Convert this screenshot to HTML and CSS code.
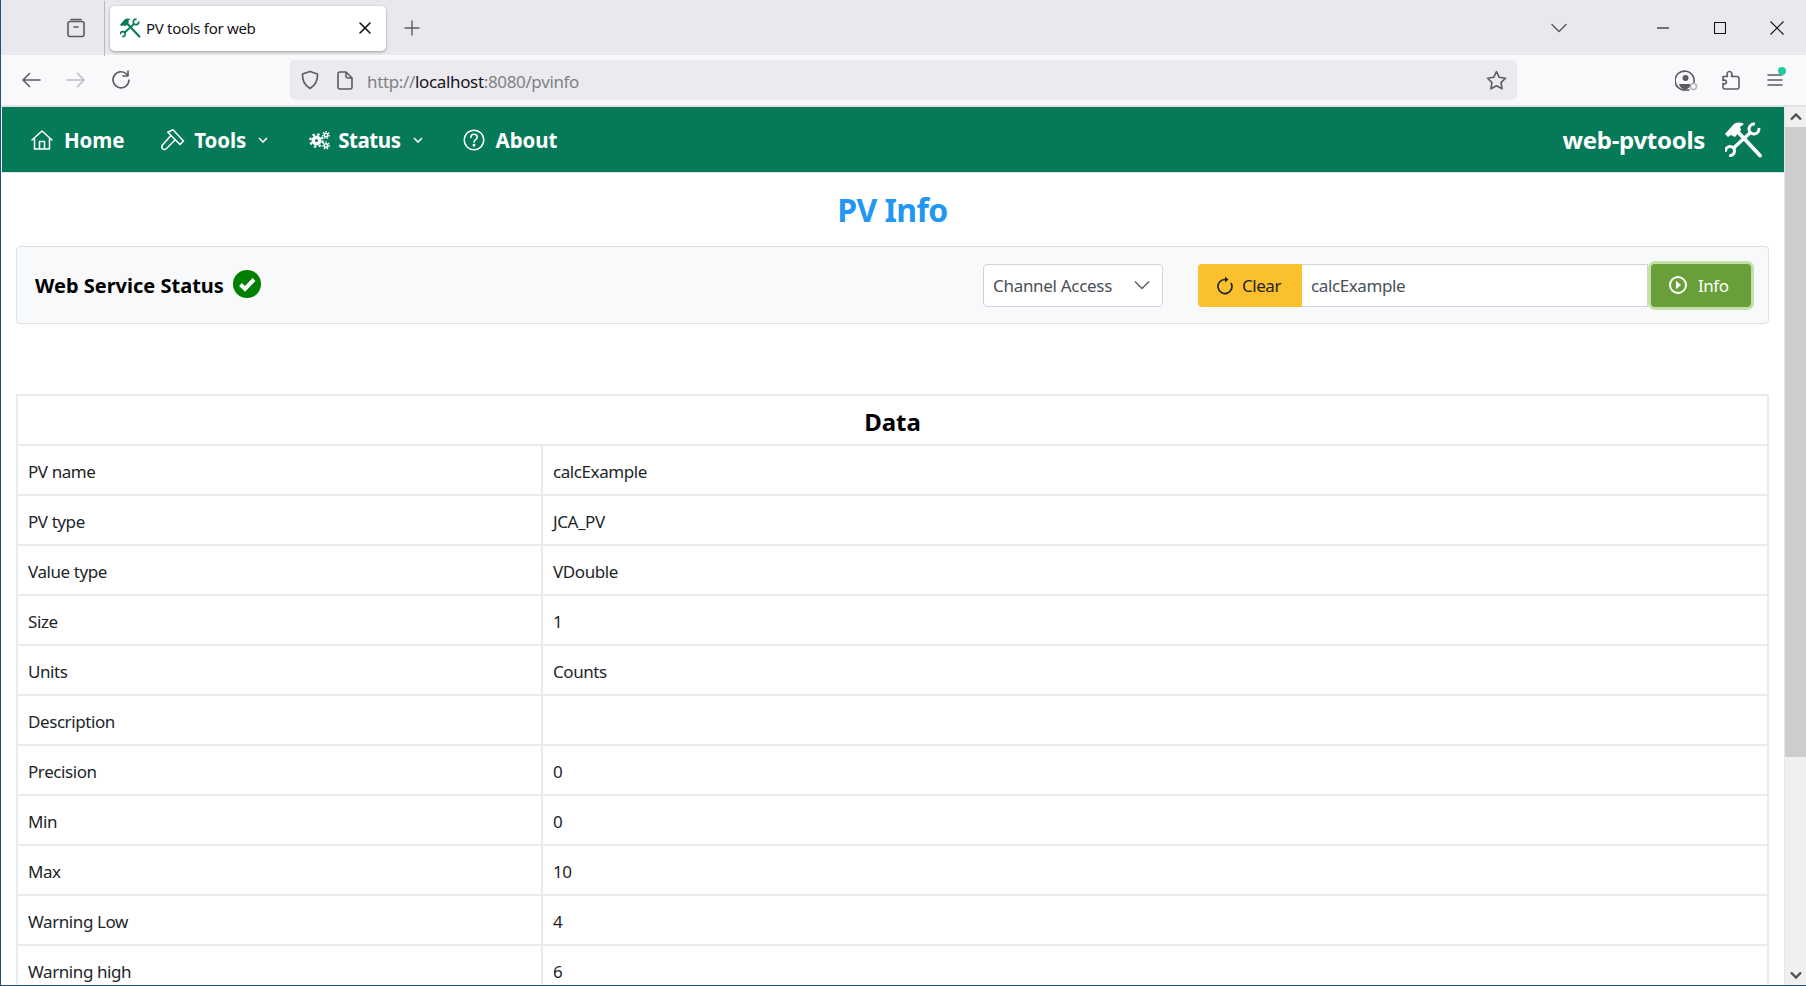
FILE: index.html
```html
<!DOCTYPE html>
<html lang="en">
<head>
<meta charset="utf-8">
<title>PV tools for web</title>
<link rel="stylesheet" href="styles.css">
</head>
<body>
<svg class="defs" aria-hidden="true">
  <symbol id="tools" viewBox="0 0 38 36">
    <g fill="none" stroke="currentColor" stroke-width="3">
      <path d="M29.900 2.100A5 5 0 1 0 33.900 6.100"/>
      <path d="M.6 29.800A4.500 4.500 0 1 1 4.200 33.400"/>
      <path stroke-width="3.400" d="M25.500 10.500 8 26.500"/>
      <path stroke-width="3.800" stroke-linecap="round" d="M12 9 35 33.500"/>
    </g>
    <path fill="currentColor" d="M0 12l3 3 3-2 4 2 6-7-1-3 4-3C15 0 11 0 8 3z"/>
  </symbol>
</svg>
<div class="window">
  <header class="tabbar">
    <svg class="ico sidebar" width="22" height="22" viewBox="0 0 22 22"><path d="M6 2.500h10M3 6.500a2 2 0 0 1 2-2h12a2 2 0 0 1 2 2v11a2 2 0 0 1-2 2H5a2 2 0 0 1-2-2zM9 10h4"/></svg>
    <div class="tab">
      <svg class="favicon" width="21" height="20"><use href="#tools"/></svg>
      <span class="tab-title">PV tools for web</span>
      <svg class="ico tab-close" width="12" height="12" viewBox="0 0 12 12"><path d="M1 1l10 10M11 1 1 11"/></svg>
    </div>
    <svg class="ico plus" width="16" height="16" viewBox="0 0 16 16"><path d="M8 1v14M1 8h14"/></svg>
    <div class="spacer"></div>
    <svg class="ico tablist" width="16" height="10" viewBox="0 0 16 10"><path d="M1 1.500l7 7 7-7"/></svg>
    <svg class="win win-min" width="12" height="2" viewBox="0 0 12 2"><path d="M0 1h12"/></svg>
    <svg class="win win-max" width="12" height="12" viewBox="0 0 12 12"><path d="M.5.5h11v11H.5z"/></svg>
    <svg class="win win-close" width="14" height="14" viewBox="0 0 14 14"><path d="M.5.5l13 13M13.500.5l-13 13"/></svg>
  </header>
  <nav class="toolbar">
    <svg class="ico nav-ico" width="20" height="16" viewBox="0 0 20 16"><path d="M19 8H2M8.500 1.500 2 8l6.500 6.500"/></svg>
    <svg class="ico nav-ico dim" width="20" height="16" viewBox="0 0 20 16"><path d="M1 8h17M11.500 1.500 18 8l-6.500 6.500"/></svg>
    <svg class="ico nav-ico" width="20" height="20" viewBox="0 0 20 20"><path d="M16 4.500A8 8 0 1 0 18 10M17 1v5h-5"/></svg>
    <div class="urlbar">
      <svg class="ico shield" width="18" height="20" viewBox="0 0 18 20"><path d="M9 1.500l7.500 2.500c.3 6-1.500 11-7.500 14.500C3 15 1.200 10 1.500 4z"/></svg>
      <svg class="ico doc" width="16" height="19" viewBox="0 0 16 19"><path d="M3 1h6l6 6v9a2 2 0 0 1-2 2H3a2 2 0 0 1-2-2V3a2 2 0 0 1 2-2zM9 1v4a2 2 0 0 0 2 2h4"/></svg>
      <span class="url"><span class="url-dim">http://</span>localhost<span class="url-dim">:8080/pvinfo</span></span>
      <div class="spacer"></div>
      <svg class="ico star" width="21" height="20" viewBox="0 0 21 20"><path d="M10.500 1.500l2.800 5.800 6.200.9-4.500 4.400 1.100 6.200-5.600-3-5.600 3 1.100-6.200-4.500-4.400 6.200-.9z"/></svg>
    </div>
    <div class="tool-right">
      <span class="account">
        <svg class="ico" width="23" height="21" viewBox="0 0 23 21"><path d="M18.500 14A9.500 9.500 0 1 0 11 20h3"/><circle class="solid" cx="10.500" cy="8" r="3"/><path class="solid" d="M4 14h12c-1 4-4 5.500-6 5.500S5 18 4 14z"/><circle class="badge" cx="18.500" cy="16.500" r="3"/></svg>
      </span>
      <svg class="ico" width="18" height="20" viewBox="0 0 18 20"><path d="M1 6.500h4.500c-1-1.500-.8-5 2-5s3 3.500 2 5H15a2 2 0 0 1 2 2V17a2 2 0 0 1-2 2H3a2 2 0 0 1-2-2v-3.500c1.500 1 3.500 0 3.500-1.500S2.500 9.500 1 10.500z"/></svg>
      <span class="menu">
        <svg class="ico" width="16" height="14" viewBox="0 0 16 14"><path d="M1 2h14M1 7h14M1 12h14"/></svg>
        <span class="dot"></span>
      </span>
    </div>
  </nav>
  <div class="viewport">
    <main class="page">
      <div class="navbar">
        <a class="nav-item">
          <svg class="nav-svg" width="22" height="22" viewBox="0 0 22 22"><path d="M1 11 11 2l10 9M3.500 9v11h15V9M8.500 20v-7.500h5V20"/></svg>
          Home
        </a>
        <a class="nav-item tools">
          <svg class="nav-svg hammer" width="24" height="24" viewBox="0 0 24 24"><path d="M6.800 4.200 12 1.800 22.500 13 19 16.500zM9.500 8 1.500 17C.5 18.500.5 20 2 21c1 1 2.500.5 3.500-.5L14 12"/></svg>
          Tools
          <svg class="chev" width="10" height="6" viewBox="0 0 10 6"><path d="M1 1l4 4 4-4"/></svg>
        </a>
        <a class="nav-item status">
          <svg class="gears" width="22" height="20" viewBox="0 0 22 20"><circle class="hub" cx="7.500" cy="10.500" r="3.300"/><circle class="teeth" cx="7.500" cy="10.500" r="6.200"/><circle class="hub small" cx="17" cy="5" r="1.800"/><circle class="teeth small" cx="17" cy="5" r="3.400"/><circle class="hub small" cx="17" cy="15.500" r="1.800"/><circle class="teeth small" cx="17" cy="15.500" r="3.400"/></svg>
          Status
          <svg class="chev" width="10" height="6" viewBox="0 0 10 6"><path d="M1 1l4 4 4-4"/></svg>
        </a>
        <a class="nav-item about">
          <svg class="nav-svg" width="22" height="22" viewBox="0 0 22 22"><circle cx="11" cy="11" r="9.800"/><path d="M7.800 8.500c0-2 1.500-3.200 3.200-3.200s3.200 1.100 3.200 2.900c0 2.300-3.200 2.500-3.200 5"/><circle class="fill" cx="11" cy="16.300" r=".7"/></svg>
          About
        </a>
        <div class="spacer"></div>
        <span class="brand">web-pvtools</span>
        <svg class="brand-ico" width="38" height="36"><use href="#tools"/></svg>
      </div>
      <h1 class="title">PV Info</h1>
      <section class="panel">
        <span class="status-label">Web Service Status</span>
        <svg class="check" width="28" height="28" viewBox="0 0 28 28"><circle cx="14" cy="14" r="14"/><path d="M7.500 14.500l4.500 4.500 9-9.500"/></svg>
        <div class="spacer"></div>
        <div class="select">
          <span>Channel Access</span>
          <svg class="select-chev" width="16" height="10" viewBox="0 0 16 10"><path d="M1 1.500l7 7 7-7"/></svg>
        </div>
        <div class="input-group">
          <button class="btn btn-clear" type="button">
            <svg class="btn-ico" width="16" height="20" viewBox="0 0 16 20"><path d="M8 4.500A7 7 0 1 0 14 8"/><path class="tri" d="M8 1.500v6l3.500-3z"/></svg>
            Clear
          </button>
          <div class="input">calcExample</div>
          <button class="btn btn-info" type="button">
            <svg class="btn-ico ring" width="20" height="20" viewBox="0 0 20 20"><circle cx="10" cy="10" r="8"/><path class="tri" d="M8 5.800l5 4.200-5 4.200z"/></svg>
            Info
          </button>
        </div>
      </section>
      <table class="data">
        <colgroup><col class="col-key"><col></colgroup>
        <thead><tr><th colspan="2">Data</th></tr></thead>
        <tbody>
          <tr><td>PV name</td><td>calcExample</td></tr>
          <tr><td>PV type</td><td>JCA_PV</td></tr>
          <tr><td>Value type</td><td>VDouble</td></tr>
          <tr><td>Size</td><td>1</td></tr>
          <tr><td>Units</td><td>Counts</td></tr>
          <tr><td>Description</td><td></td></tr>
          <tr><td>Precision</td><td>0</td></tr>
          <tr><td>Min</td><td>0</td></tr>
          <tr><td>Max</td><td>10</td></tr>
          <tr><td>Warning Low</td><td>4</td></tr>
          <tr><td>Warning high</td><td>6</td></tr>
        </tbody>
      </table>
    </main>
    <aside class="scrollbar">
      <div class="sb-btn"><svg class="sb-arrow" width="12" height="8" viewBox="0 0 12 8"><path d="M1 6.500l5-5 5 5"/></svg></div>
      <div class="sb-thumb"></div>
      <div class="sb-track"></div>
      <div class="sb-btn"><svg class="sb-arrow" width="12" height="8" viewBox="0 0 12 8"><path d="M1 1.500l5 5 5-5"/></svg></div>
    </aside>
  </div>
</div>
</body>
</html>
```
FILE: styles.css
```css
* { box-sizing: border-box; }
html, body { margin: 0; height: 100%; overflow: hidden; }
body { font-family: "Noto Sans", "Open Sans", sans-serif; background: #fff; color: #212529; }
.defs { position: absolute; width: 0; height: 0; }
.spacer { flex: 1; }
.window { height: 986px; display: flex; flex-direction: column; border-left: 1px solid #14567d; border-bottom: 1px solid #14567d; overflow: hidden; }
.ico { fill: none; stroke: #5b5b66; stroke-width: 1.6; stroke-linecap: round; stroke-linejoin: round; flex: none; }

.tabbar { height: 55px; flex: none; background: #e9e9ed; display: flex; align-items: center; }
.sidebar { margin-left: 64px; }
.tab { width: 276px; height: 45px; margin-left: 23px; margin-top: 1px; position: relative; background: #fff; border-radius: 5px; box-shadow: 0 1px 3px rgba(0,0,0,.35); display: flex; align-items: center; padding-left: 10px; }
.tab::before { content: ""; position: absolute; left: -6px; top: -5px; width: 1px; height: 55px; background: #b9b9bd; }
.favicon { color: #077a58; flex: none; }
.tab-title { font-size: 15px; letter-spacing: -.3px; margin-left: 5px; color: #15141a; flex: 1; }
.tab-close { stroke: #15141a; margin-right: 15px; }
.plus { margin-left: 18px; stroke-width: 1.4; }
.tablist { margin-right: 90px; stroke-width: 1.5; }
.win { fill: none; stroke: #111; stroke-width: 1.1; flex: none; }
.win-min { margin-right: 45px; }
.win-max { margin-right: 44px; }
.win-close { margin-right: 22px; }

.toolbar { height: 52px; flex: none; background: #f9f9fb; border-bottom: 2px solid #e2e2e6; display: flex; align-items: center; padding: 0 23px 0 20px; gap: 25px; }
.nav-ico.dim { stroke: #bdbdc3; }
.urlbar { width: 1227px; height: 40px; margin-left: 134px; background: #ebebef; border-radius: 5px; display: flex; align-items: center; padding: 0 10px 0 11px; }
.shield { margin-right: 18px; }
.doc { margin-right: 14px; }
.url { font-size: 17px; letter-spacing: -.35px; color: #15141a; padding-top: 2px; }
.url-dim { color: #808085; }
.tool-right { display: flex; align-items: center; gap: 24px; margin-left: auto; }
.tool-right > :last-child { margin-left: 3px; }
.solid { fill: #5b5b66; stroke: none; }
.badge { fill: #f9f9fb; stroke: #b5b5ba; stroke-width: 1.6; }
.account, .menu { display: flex; position: relative; }
.dot { position: absolute; right: -3px; top: -6px; width: 8px; height: 8px; border-radius: 50%; background: #26c9a4; }

.viewport { flex: 1; min-height: 0; display: flex; }
.page { flex: 1; min-width: 0; overflow: hidden; }
.scrollbar { width: 22px; flex: none; display: flex; flex-direction: column; border-left: 1px solid #e6e6e6; background: #f0f0f0; }
.sb-btn { height: 20px; display: flex; align-items: center; justify-content: center; flex: none; }
.sb-arrow { fill: none; stroke: #505050; stroke-width: 2.4; }
.sb-thumb { height: 630px; flex: none; background: #cdcdcd; }
.sb-track { flex: 1; }

.navbar { height: 65px; margin-left: 1px; background: #067a58; display: flex; align-items: center; color: #fff; font-size: 20.5px; font-weight: 700; box-shadow: 0 1px 0 #dfe3ec; padding-left: 29px; padding-right: 21px; }
.nav-item { display: flex; align-items: center; letter-spacing: -.1px; }
.nav-svg { fill: none; stroke: #fff; stroke-width: 1.5; stroke-linejoin: round; stroke-linecap: round; margin-right: 11px; flex: none; }
.nav-svg.hammer { margin-right: 9px; }
.nav-svg .fill { fill: #fff; }
.tools { margin-left: 37px; }
.status { margin-left: 41px; letter-spacing: -.45px; }
.about { margin-left: 40px; }
.chev { fill: none; stroke: #fff; stroke-width: 1.6; margin-left: 12px; flex: none; }
.gears { margin-right: 7px; flex: none; fill: none; stroke: #fff; }
.hub { stroke-width: 3.4; }
.hub.small { stroke-width: 1.6; }
.teeth { stroke-width: 2.2; stroke-dasharray: 2.4 2.47; }
.teeth.small { stroke-width: 1.2; stroke-dasharray: 1.5 1.5; }
.brand { font-size: 24px; letter-spacing: -.3px; margin-right: 20px; }
.brand-ico { color: #fff; flex: none; }

.title { margin: 0; padding-top: 19px; height: 74px; font-size: 32px; line-height: 38px; font-weight: 700; text-align: center; color: #2196f3; letter-spacing: -.6px; }
.panel { margin: 0 15px 70px 15px; height: 78px; display: flex; align-items: center; background: #f8f9fa; border: 1px solid #dee2e6; border-radius: 4px; padding: 0 17px 0 18px; }
.status-label { font-size: 20px; font-weight: 700; color: #000; letter-spacing: 0; margin-right: 9px; padding-top: 1px; }
.check { flex: none; margin-top: -2px; }
.check circle { fill: #008000; }
.check path { fill: none; stroke: #fff; stroke-width: 4; }
.select { width: 180px; height: 43px; display: flex; align-items: center; justify-content: space-between; padding: 0 12px 0 9px; background: #fff; border: 1px solid #ced4da; border-radius: 4px; font-size: 17px; color: #495057; letter-spacing: -.3px; margin-right: 35px; }
.select-chev { fill: none; stroke: #5a6268; stroke-width: 1.5; flex: none; }
.input-group { display: flex; align-items: center; height: 43px; }
.btn { height: 43px; border: 0; font-family: inherit; font-size: 17px; letter-spacing: -.45px; display: flex; align-items: center; gap: 9px; padding: 0; }
.btn-clear { width: 104px; padding-left: 19px; background: #fbc02d; color: #212529; border-radius: 4px 0 0 4px; }
.btn-ico { fill: none; stroke: currentColor; stroke-width: 1.7; flex: none; }
.btn-ico.ring { stroke-width: 2; }
.input { width: 346px; height: 43px; display: flex; align-items: center; background: #fff; border: 1px solid #ced4da; border-left: 0; padding: 0 0 0 9px; font-size: 17px; letter-spacing: -.4px; color: #495057; }
.btn-info { width: 100px; margin-left: 3px; padding-left: 17px; gap: 10px; background: #689f38; color: #fff; border-radius: 4px; box-shadow: 0 0 0 3px #c5dfa9; }
.tri { fill: currentColor; stroke: none; }

.data { width: 1753px; margin-left: 15px; border-collapse: collapse; table-layout: fixed; color: #212529; }
.col-key { width: 525px; }
.data th { height: 50px; border: 2px solid #e9ecef; font-size: 24px; color: #000; letter-spacing: 0; padding: 2px 0 0; }
.data td { height: 50px; border: 2px solid #e9ecef; padding: 2px 10px 0; font-size: 17px; letter-spacing: -.42px; }
```
